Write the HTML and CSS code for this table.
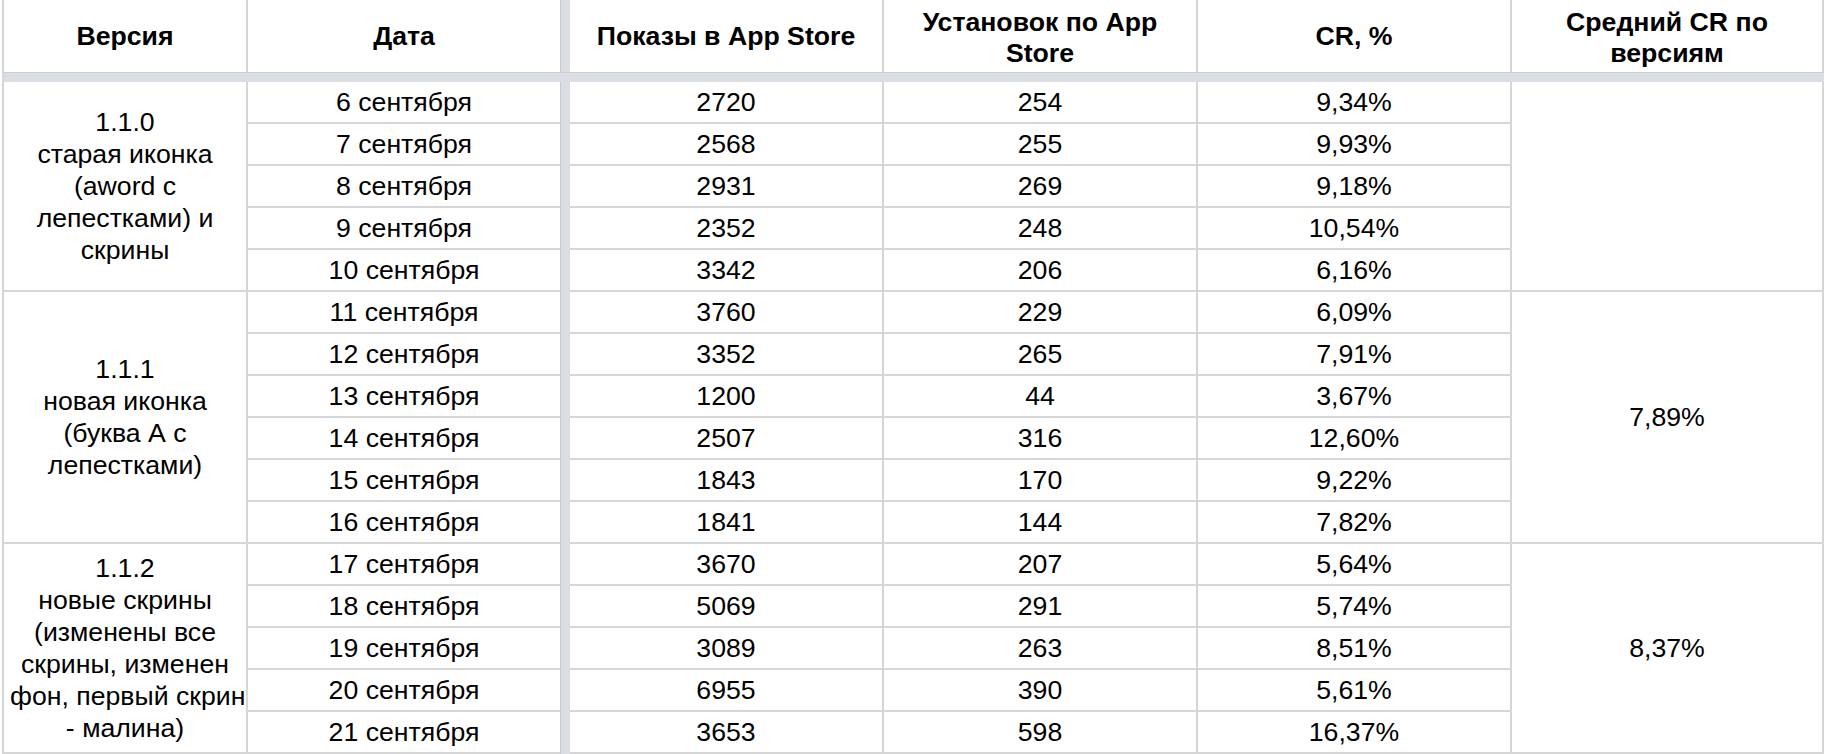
FILE: index.html
```html
<!DOCTYPE html>
<html lang="ru">
<head>
<meta charset="utf-8">
<title>CR по версиям</title>
<link rel="stylesheet" href="styles.css">
</head>
<body>
<table class="sheet">
  <colgroup>
    <col class="c-ver"><col class="c-date"><col class="c-bar"><col class="c-num"><col class="c-num"><col class="c-num"><col class="c-avg">
  </colgroup>
  <thead>
    <tr class="head">
      <th>Версия</th>
      <th class="date">Дата</th>
      <td class="bar"></td>
      <th>Показы в App Store</th>
      <th class="two">Установок по App<br>Store</th>
      <th>CR, %</th>
      <th class="two">Средний CR по<br>версиям</th>
    </tr>
    <tr class="band"><td colspan="7"></td></tr>
  </thead>
  <tbody>
    <tr>
      <td rowspan="5" class="ver">1.1.0<br>старая иконка<br>(aword с<br>лепестками) и<br>скрины</td>
      <td class="date">6 сентября</td>
      <td class="bar" rowspan="16"></td>
      <td>2720</td><td>254</td><td>9,34%</td>
      <td rowspan="5" class="avg"></td>
    </tr>
    <tr><td class="date">7 сентября</td><td>2568</td><td>255</td><td>9,93%</td></tr>
    <tr><td class="date">8 сентября</td><td>2931</td><td>269</td><td>9,18%</td></tr>
    <tr><td class="date">9 сентября</td><td>2352</td><td>248</td><td>10,54%</td></tr>
    <tr><td class="date">10 сентября</td><td>3342</td><td>206</td><td>6,16%</td></tr>
    <tr>
      <td rowspan="6" class="ver">1.1.1<br>новая иконка<br>(буква А с<br>лепестками)</td>
      <td class="date">11 сентября</td><td>3760</td><td>229</td><td>6,09%</td>
      <td rowspan="6" class="avg">7,89%</td>
    </tr>
    <tr><td class="date">12 сентября</td><td>3352</td><td>265</td><td>7,91%</td></tr>
    <tr><td class="date">13 сентября</td><td>1200</td><td>44</td><td>3,67%</td></tr>
    <tr><td class="date">14 сентября</td><td>2507</td><td>316</td><td>12,60%</td></tr>
    <tr><td class="date">15 сентября</td><td>1843</td><td>170</td><td>9,22%</td></tr>
    <tr><td class="date">16 сентября</td><td>1841</td><td>144</td><td>7,82%</td></tr>
    <tr>
      <td rowspan="5" class="ver">1.1.2<br>новые скрины<br>(изменены все<br>скрины, изменен<br>фон, первый скрин<br>- малина)</td>
      <td class="date">17 сентября</td><td>3670</td><td>207</td><td>5,64%</td>
      <td rowspan="5" class="avg">8,37%</td>
    </tr>
    <tr><td class="date">18 сентября</td><td>5069</td><td>291</td><td>5,74%</td></tr>
    <tr><td class="date">19 сентября</td><td>3089</td><td>263</td><td>8,51%</td></tr>
    <tr><td class="date">20 сентября</td><td>6955</td><td>390</td><td>5,61%</td></tr>
    <tr><td class="date">21 сентября</td><td>3653</td><td>598</td><td>16,37%</td></tr>
  </tbody>
</table>
</body>
</html>
```

FILE: styles.css
```css
* { box-sizing: border-box; }

html, body {
  margin: 0;
  background: #ffffff;
}

body {
  font-family: "Liberation Sans", Arial, sans-serif;
  font-size: 26.67px;
  color: #000000;
  overflow: hidden;
}

.sheet {
  border-collapse: separate;
  border-spacing: 0;
  table-layout: fixed;
  width: 1822px;
  margin-left: 2px;
  border-left: 2px solid #d6d6d6;
}

.c-ver { width: 244px; }
.c-date { width: 312px; }
.c-bar { width: 10px; }
.c-num { width: 314px; }
.c-avg { width: 312px; }

.sheet th,
.sheet td {
  padding: 0 6px;
  text-align: center;
  vertical-align: middle;
  border-right: 2px solid #d6d6d6;
  border-bottom: 2px solid #d6d6d6;
  line-height: 32px;
  white-space: nowrap;
  font-weight: normal;
}

.sheet th {
  font-weight: bold;
  line-height: 31px;
  border-bottom: none;
}

.sheet th.two { padding-top: 4px; }

.head { height: 72px; }

.sheet .date { border-right: none; }

.sheet .bar {
  padding: 0;
  border-right: none;
  border-bottom: none;
  border-left: 1px solid #c9cbcf;
  background: #dadde4;
}

.band { height: 10px; }

.sheet .band td {
  padding: 0;
  height: 10px;
  border: none;
  border-top: 1px solid #cacccf;
  background: #dadde4;
}

.sheet tbody tr { height: 42px; }
```
